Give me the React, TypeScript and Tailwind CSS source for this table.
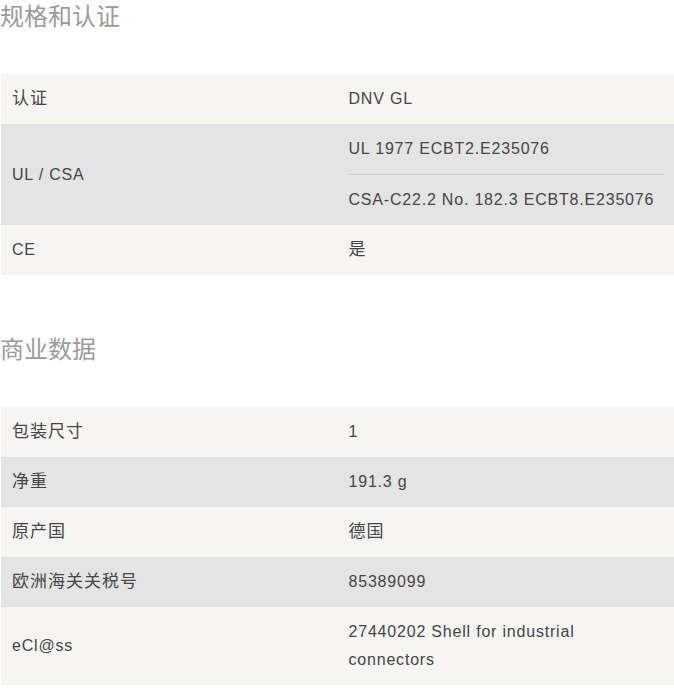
const font = { fontFamily: '"Liberation Sans", "Noto Sans CJK SC", sans-serif' };

type Row = { label: string; values: string[] };

const specs: Row[] = [
  { label: "认证", values: ["DNV GL"] },
  { label: "UL / CSA", values: ["UL 1977 ECBT2.E235076", "CSA-C22.2 No. 182.3 ECBT8.E235076"] },
  { label: "CE", values: ["是"] },
];

const commercial: Row[] = [
  { label: "包装尺寸", values: ["1"] },
  { label: "净重", values: ["191.3 g"] },
  { label: "原产国", values: ["德国"] },
  { label: "欧洲海关关税号", values: ["85389099"] },
  { label: "eCl@ss", values: ["27440202 Shell for industrial connectors"] },
];

// CJK glyphs sit a touch larger in the reference
const Txt = ({ children }: { children: string }) =>
  /[\u4e00-\u9fff]/.test(children) ? (
    <span className="text-[17px] tracking-[1px]">{children}</span>
  ) : (
    <span>{children}</span>
  );

function Section({ title, rows, last }: { title: string; rows: Row[]; last?: boolean }) {
  return (
    <section className={last ? "" : "mb-[58px]"}>
      <h2 className="text-[24px] leading-[34px] text-[#9b9b9b] font-normal">{title}</h2>
      <div className="mt-[40px] ml-[1px]">
        {rows.map((row, i) => (
          <div
            key={row.label}
            className={`grid grid-cols-2 text-[16px] leading-[28px] tracking-[0.8px] text-[#444449] ${
              i % 2 === 0 ? "bg-[#f6f5f2]" : "bg-[#e4e4e4]"
            }`}
          >
            <div className="flex items-center px-[11px] py-[11px]">
              <Txt>{row.label}</Txt>
            </div>
            <div className="pl-[11px] pr-[10px]">
              {row.values.map((v, j) => (
                <div
                  key={v}
                  className={`py-[11px] ${j > 0 ? "border-t border-[#cfcfcf]" : ""}`}
                >
                  <Txt>{v}</Txt>
                </div>
              ))}
            </div>
          </div>
        ))}
      </div>
    </section>
  );
}

export default function App() {
  return (
    <div className="w-[674px] bg-white" style={font}>
      <Section title="规格和认证" rows={specs} />
      <Section title="商业数据" rows={commercial} last />
    </div>
  );
}
